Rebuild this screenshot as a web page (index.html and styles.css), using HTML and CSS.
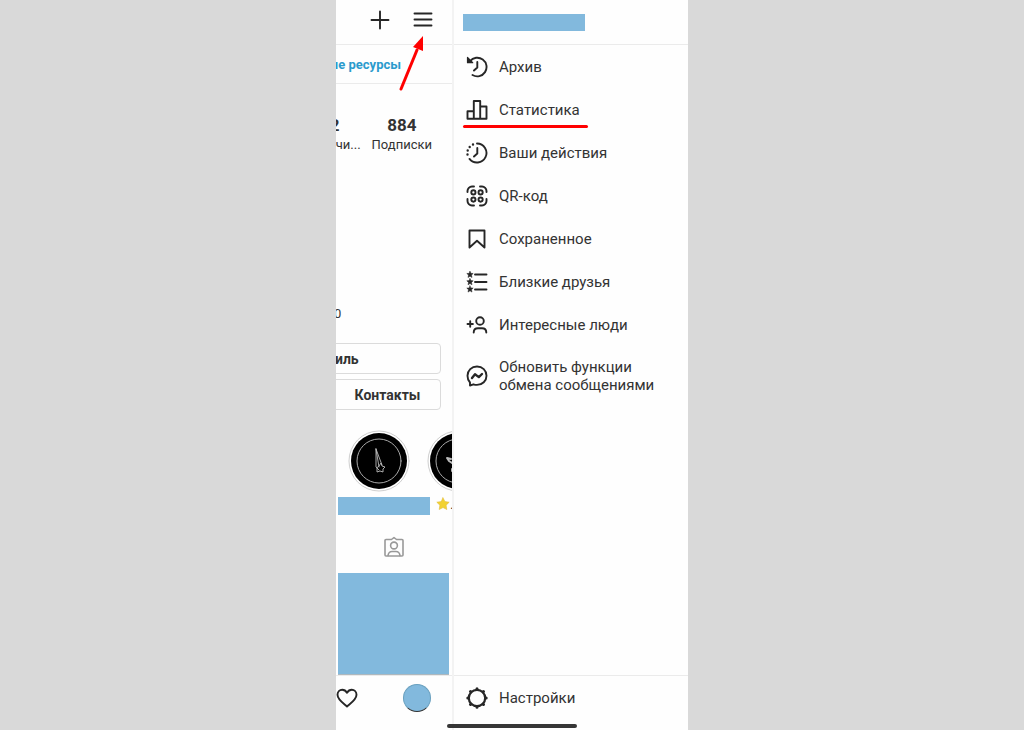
FILE: index.html
```html
<!DOCTYPE html>
<html lang="ru">
<head>
<meta charset="utf-8">
<meta name="viewport" content="width=device-width, initial-scale=1">
<title>Меню профиля</title>
<link rel="stylesheet" href="styles.css">
</head>
<body>
<div class="phone">
  <main class="profile">
    <header class="topbar">
      <button class="icon-btn" aria-label="Создать"><svg width="20" height="20" viewBox="0 0 20 20"><path d="M10 1.500v17M1.500 10h17"/></svg></button>
      <button class="icon-btn" aria-label="Меню"><svg width="20" height="20" viewBox="0 0 20 20"><path d="M1.500 3.500h17M1.500 9.500h17M1.500 15.500h17"/></svg></button>
    </header>
    <div class="resources"><a href="#">ые ресурсы</a></div>
    <div class="stats">
      <div class="stat stat-cut"><b>2</b><span>чи...</span></div>
      <div class="stat"><b>884</b><span>Подписки</span></div>
    </div>
    <p class="bio">0</p>
    <div class="actions">
      <button class="action action-edit">иль</button>
      <button class="action">Контакты</button>
    </div>
    <div class="highlights">
      <div class="highlight">
        <svg width="62" height="62" viewBox="0 0 62 62"><circle cx="31" cy="31" r="30" fill="#fff" stroke="#cfcfcf" stroke-width="1"/><circle cx="31" cy="31" r="28" fill="#000" stroke="none"/><circle cx="31" cy="31" r="22" fill="none" stroke="#aaa" stroke-width="1"/><path d="M28 19v18l3 3M28 19l6 16M28 19l3 18M31 36l2-3 1 3 3 1-2 2v3l-3-1-3 1v-4z" fill="none" stroke="#bbb" stroke-width=".9"/></svg>
        <span class="hidden-name"></span>
      </div>
      <div class="highlight">
        <svg width="62" height="62" viewBox="0 0 62 62"><circle cx="31" cy="31" r="30" fill="#fff" stroke="#cfcfcf" stroke-width="1"/><circle cx="31" cy="31" r="28" fill="#000" stroke="none"/><circle cx="31" cy="31" r="22" fill="none" stroke="#aaa" stroke-width="1"/><path d="M24 29l-4-1 2 3 3 2M25 41v-2" fill="none" stroke="#bbb"/></svg>
        <span class="star-name"><svg width="14" height="14" viewBox="0 0 14 14"><path d="m7 .8 1.900 3.800 4.300.600-3.100 3 .700 4.300L7 10.500l-3.800 2 .700-4.300-3.100-3 4.300-.600z" fill="#f2d232" stroke="#e3bd3e" stroke-width=".6"/></svg>.</span>
      </div>
    </div>
    <div class="tab"><svg width="22" height="22" viewBox="0 0 22 22"><path d="M3 3.500h5.500L11 1.500l2.500 2H19a1 1 0 0 1 1 1V19a1 1 0 0 1-1 1H3a1 1 0 0 1-1-1V4.500a1 1 0 0 1 1-1z"/><circle cx="11" cy="9.500" r="3.400"/><path d="M5 19.500c.5-3 2.500-4 4-4h4c1.500 0 3.500 1 4 4"/></svg></div>
    <div class="photo"></div>
    <nav class="bottom-nav">
      <button class="icon-btn" aria-label="Действия"><svg width="22" height="20" viewBox="0 0 22 20"><path d="M11 18.500C8 15.800 1.500 11.800 1.500 6.800c0-3 2.200-5.100 4.700-5.100 2.100 0 3.700 1.100 4.800 3 1.100-1.900 2.700-3 4.800-3 2.500 0 4.700 2.100 4.700 5.100 0 5-6.500 9-9.500 11.700z"/></svg></button>
      <button class="avatar" aria-label="Профиль"></button>
    </nav>
  </main>

  <aside class="drawer">
    <header class="drawer-head"><span class="hidden-user"></span></header>
    <nav class="menu">
      <a class="item" href="#"><svg width="22" height="22" viewBox="0 0 22 22"><path d="M4 5.200A9.300 9.300 0 1 1 6.500 19M11.300 6v5.500L8 14.500"/><path d="M1.500 1.500v5.200h5.200z" fill="#262626" stroke-width="1.200"/></svg>Архив</a>
      <a class="item marked" href="#"><svg width="22" height="22" viewBox="0 0 22 22"><path d="M1.500 19.800v-7.500h6.300v7.500zM7.800 19.800V2h6.400v17.800zM14.200 19.800V7.500h6.300v12.300z"/></svg>Статистика</a>
      <a class="item" href="#"><svg width="22" height="22" viewBox="0 0 22 22"><path d="M11 1.500a9.500 9.500 0 1 1-7.500 15.400M11.300 6v5.500L8 14.500"/><path d="M7 2.500h.01M3.700 5h.01M1.700 8.500h.01M1.500 12.500h.01" stroke-width="2.400"/></svg>Ваши действия</a>
      <a class="item" href="#"><svg width="22" height="22" viewBox="0 0 22 22"><path d="M1.500 7V6A4.500 4.500 0 0 1 6 1.500h2M14 1.500h2A4.500 4.500 0 0 1 20.500 6v1M20.500 14v2a4.500 4.500 0 0 1-4.500 4.500h-2M8 20.500H6A4.500 4.500 0 0 1 1.500 16v-2"/><circle cx="7.400" cy="7.400" r="2.100"/><circle cx="14.600" cy="7.400" r="2.100"/><circle cx="7.400" cy="14.600" r="2.100"/><circle cx="14.600" cy="14.600" r="2.100"/></svg>QR-код</a>
      <a class="item" href="#"><svg width="22" height="22" viewBox="0 0 22 22"><path d="M3.500 2.500h15v17L11 12.800l-7.500 6.700z"/></svg>Сохраненное</a>
      <a class="item" href="#"><svg width="22" height="22" viewBox="0 0 22 22"><path d="M9 3.500h11.500M9 11h11.500M9 18.500h11.500"/><g fill="#262626" stroke="#262626" stroke-width=".5"><path d="m4 .3.900 2 2.300.200-1.700 1.600.500 2.400-2-1.300-2 1.300.500-2.400L.800 2.500l2.300-.200z"/><path d="m4 7.600.900 2 2.300.200-1.700 1.600.500 2.400-2-1.300-2 1.300.500-2.400L.800 9.800l2.300-.200z"/><path d="m4 14.900.900 2 2.300.200-1.700 1.600.500 2.400-2-1.300-2 1.300.500-2.400-1.700-1.600 2.300-.200z"/></g></svg>Близкие друзья</a>
      <a class="item" href="#"><svg width="22" height="22" viewBox="0 0 22 22"><circle cx="14" cy="7" r="3.800"/><path d="M7.700 18.500c0-2.800 1.700-4.300 4.300-4.300h4c2.600 0 4.300 1.500 4.300 4.300M1.500 10h5.400M4.200 7.300v5.400"/></svg>Интересные люди</a>
      <a class="item item-tall" href="#"><svg width="22" height="22" viewBox="0 0 22 22"><path d="M11 1.500c5.400 0 9.500 4 9.500 9.200s-4.100 9.200-9.500 9.200c-1.300 0-2.500-.2-3.600-.6L4 20.500v-3c-1.600-1.700-2.500-4-2.500-6.800C1.500 5.500 5.600 1.500 11 1.500z"/><path d="m6 13 3-3.700 3.800 2.800L16 9" stroke-width="2.400"/></svg><span>Обновить функции обмена сообщениями</span></a>
    </nav>
    <a class="item settings" href="#"><svg width="22" height="22" viewBox="0 0 22 22"><circle cx="11" cy="11" r="8.200" stroke-width="2.200"/><path d="M11 1.800v.6M11 19.600v.6M1.800 11h.6M19.600 11h.6M4.500 4.500l.4.400M17.100 17.100l.4.400M4.500 17.500l.4-.4M17.100 4.900l.4-.4" stroke-width="3"/></svg>Настройки</a>
  </aside>

  <svg class="arrow" width="28" height="58" viewBox="0 0 28 58" aria-hidden="true"><path d="M3 54 19 15" fill="none" stroke="#f00" stroke-width="3" stroke-linecap="round"/><path d="M25 1v15l-10-4z" fill="#f00" stroke="none"/></svg>
  <div class="home-bar"></div>
</div>
</body>
</html>
```
FILE: styles.css
```css
* { box-sizing: border-box; }
body {
  margin: 0;
  background: #d9d9d9;
  color: #333;
  font-family: Roboto, "Noto Sans", sans-serif;
  font-size: 15px;
}
svg {
  display: block;
  flex: none;
  fill: none;
  stroke: #262626;
  stroke-width: 1.9;
  stroke-linecap: round;
  stroke-linejoin: round;
}
a { color: inherit; text-decoration: none; }
button { font: inherit; color: inherit; padding: 0; border: 0; background: none; }

.phone {
  position: relative;
  display: grid;
  grid-template-columns: 116px 1fr;
  max-width: 352px;
  min-height: 100vh;
  margin: 0 auto;
  background: #fefefe;
}

.profile {
  display: flex;
  flex-direction: column;
  min-width: 0;
  overflow: hidden;
}
.topbar {
  display: flex;
  justify-content: flex-end;
  align-items: center;
  gap: 23px;
  height: 45px;
  padding: 0 19px 5px 0;
  border-bottom: 1px solid #ebebeb;
}
.resources {
  display: flex;
  justify-content: flex-end;
  align-items: center;
  height: 39px;
  padding-right: 51px;
  border-bottom: 1px solid #ebebeb;
  color: #2b9bcd;
  font-size: 13px;
  font-weight: 700;
  white-space: nowrap;
}
.stats {
  display: flex;
  justify-content: flex-end;
  gap: 11px;
  padding: 30px 20px 0 0;
}
.stat {
  display: flex;
  flex-direction: column;
  align-items: center;
  font-size: 13px;
  line-height: 18px;
}
.stat b { font-size: 17px; line-height: 22px; }
.stat-cut { align-items: flex-start; }
.stat-cut b { margin-left: -6px; }
.bio { margin: 151px 0 0 -2px; font-size: 13px; line-height: 18px; }
.actions {
  display: flex;
  flex-direction: column;
  gap: 5px;
  margin: 20px 11px 0 -8px;
}
.action {
  height: 31px;
  padding-left: 6px;
  border: 1px solid #dbdbdb;
  border-radius: 4px;
  font-size: 14px;
  font-weight: 700;
}
.action-edit { text-align: left; }
.highlights { display: flex; gap: 2px; margin-top: 20px; padding-left: 2px; }
.highlight {
  display: flex;
  flex: none;
  flex-direction: column;
  align-items: center;
  gap: 5px;
  width: 92px;
}
.highlight:first-child > svg { margin-left: -10px; }
.highlight:last-child { align-items: flex-start; margin-left: -5px; }
.hidden-name { width: 92px; height: 18px; background: #82b9dd; }
.star-name { display: flex; height: 14px; padding-left: 9px; line-height: 14px; }
.tab { display: flex; justify-content: center; margin-top: 21px; }
.tab svg { stroke: #999; stroke-width: 1.6; }
.photo {
  height: 102px;
  margin: 15px 3px 0 2px;
  background: #82b9dd;
  border-bottom: 1px solid #aeb8be;
}
.bottom-nav {
  display: flex;
  align-items: center;
  justify-content: space-between;
  height: 55px;
  margin-top: auto;
  padding: 0 21px 11px 0;
  border-top: 1px solid #ebebeb;
}
.avatar {
  width: 28px;
  height: 28px;
  border: 1px solid #69a0bf;
  border-bottom-color: #333;
  border-radius: 50%;
  background: #82b9dd;
}

.drawer {
  display: flex;
  flex-direction: column;
  border-left: 2px solid #f3f3f3;
}
.drawer-head {
  display: flex;
  align-items: center;
  height: 45px;
  padding-left: 9px;
  border-bottom: 1px solid #ebebeb;
}
.hidden-user { width: 122px; height: 17px; background: #82b9dd; }
.menu { display: flex; flex-direction: column; }
.item {
  display: flex;
  align-items: center;
  gap: 11px;
  height: 43px;
  padding-left: 12px;
  line-height: 18px;
}
.item span { max-width: 170px; }
.marked { position: relative; }
.marked::after {
  content: "";
  position: absolute;
  left: 9px;
  top: 37px;
  width: 125px;
  height: 3px;
  border-radius: 2px;
  background: #f00;
}
.item-tall { height: 60px; }
.settings {
  height: 55px;
  margin-top: auto;
  padding-bottom: 11px;
  border-top: 1px solid #ebebeb;
}

.arrow { position: absolute; left: 62px; top: 35px; }
.home-bar {
  position: absolute;
  left: 111px;
  bottom: 2px;
  width: 130px;
  height: 4px;
  border-radius: 2px;
  background: #363636;
}
```
